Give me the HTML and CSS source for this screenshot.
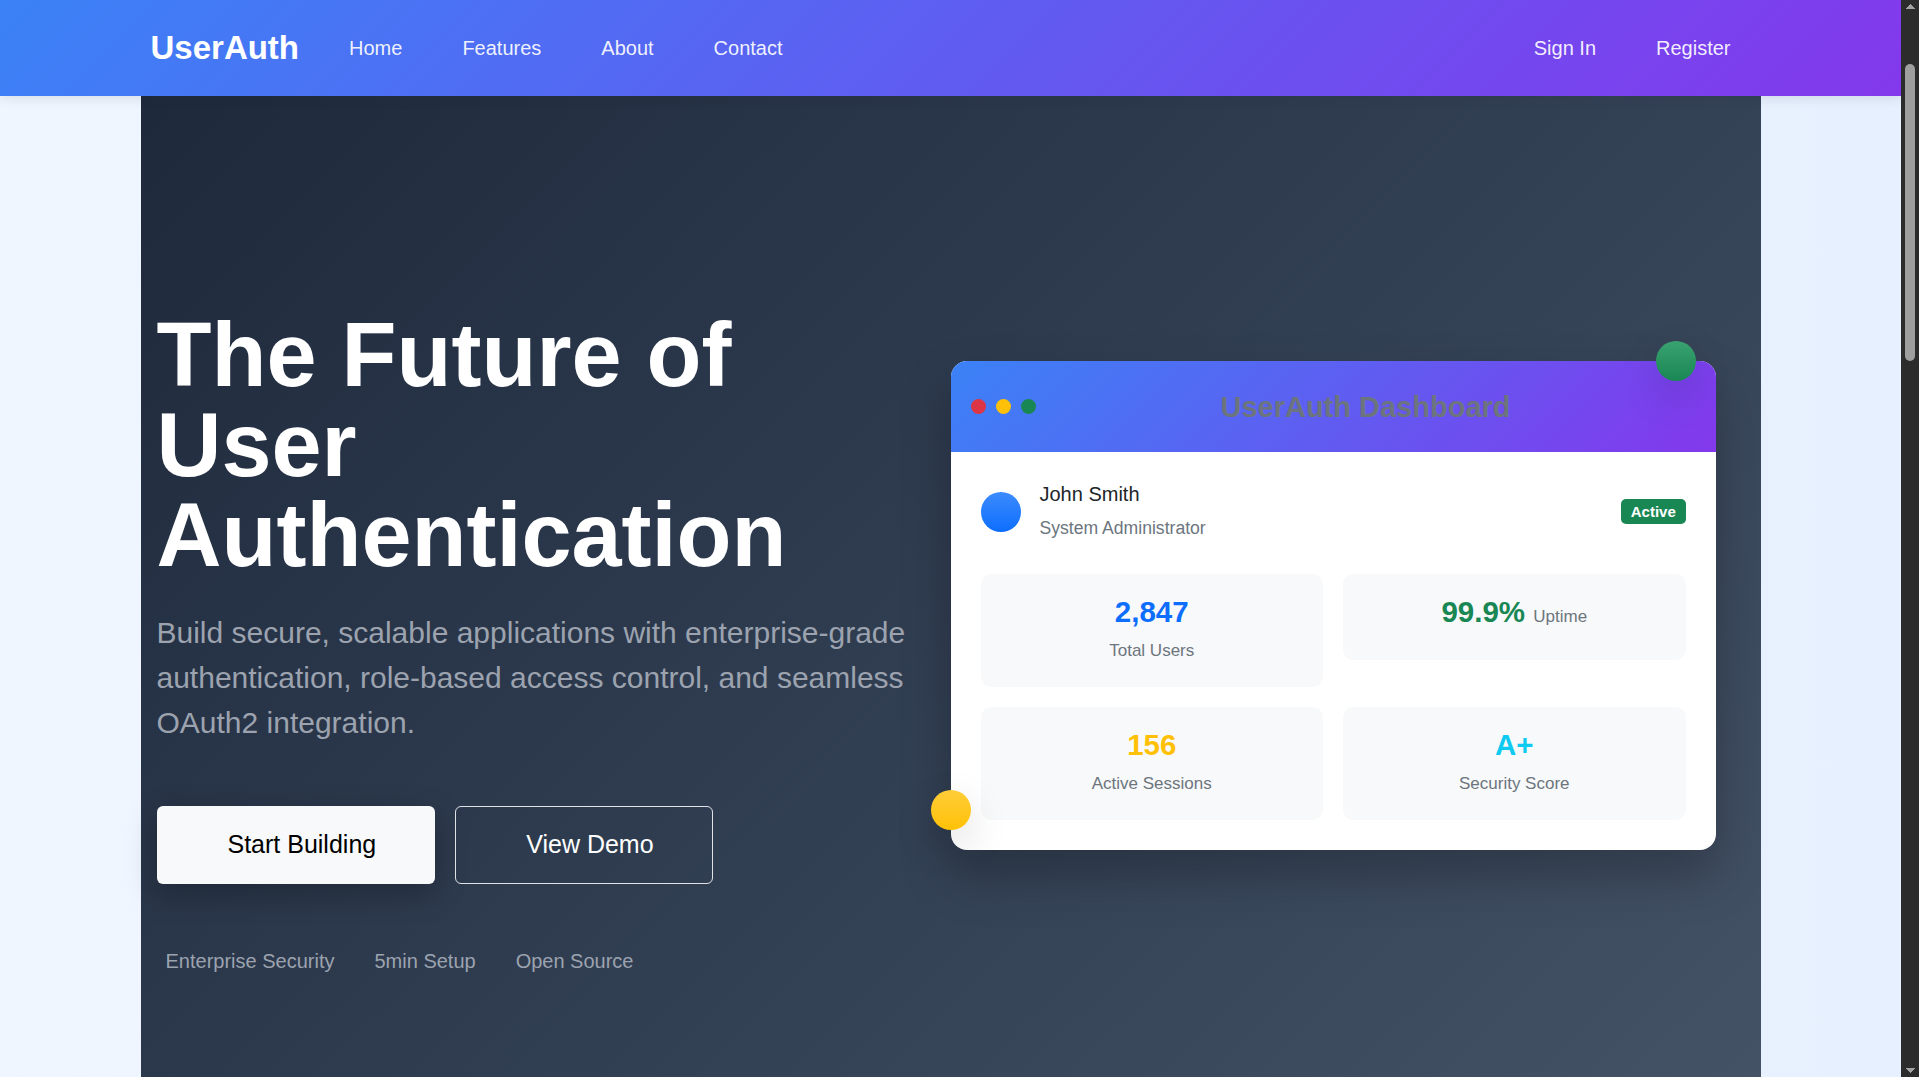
FILE: index.html
```html
<!DOCTYPE html>
<html lang="en">
<head>
<meta charset="utf-8">
<title>UserAuth - The Future of User Authentication</title>
<link rel="stylesheet" href="styles.css">
</head>
<body>
<nav class="topbar">
  <div class="topbar-inner">
    <a class="brand" href="#">UserAuth</a>
    <ul class="nav-links">
      <li><a href="#">Home</a></li>
      <li><a href="#features">Features</a></li>
      <li><a href="#about">About</a></li>
      <li><a href="#contact">Contact</a></li>
    </ul>
    <ul class="nav-links nav-right">
      <li><a href="#">Sign In</a></li>
      <li><a href="#">Register</a></li>
    </ul>
  </div>
</nav>

<main>
  <section class="hero">
    <div class="hero-text">
      <h1 class="hero-title">The Future of User Authentication</h1>
      <p class="hero-lead">Build secure, scalable applications with enterprise-grade authentication, role-based access control, and seamless OAuth2 integration.</p>
      <div class="hero-actions">
        <a class="btn btn-light" href="#">Start Building</a>
        <a class="btn btn-outline" href="#">View Demo</a>
      </div>
      <div class="hero-highlights">
        <span>Enterprise Security</span>
        <span>5min Setup</span>
        <span>Open Source</span>
      </div>
    </div>

    <div class="hero-visual">
      <div class="dash-card">
        <div class="dash-head">
          <div class="dots">
            <span class="dot dot-red"></span>
            <span class="dot dot-yellow"></span>
            <span class="dot dot-green"></span>
          </div>
          <div class="dash-title">UserAuth Dashboard</div>
        </div>
        <div class="dash-body">
          <div class="user-row">
            <div class="avatar"></div>
            <div class="user-info">
              <div class="user-name">John Smith</div>
              <div class="user-role">System Administrator</div>
            </div>
            <span class="badge">Active</span>
          </div>
          <div class="stats">
            <div class="stat">
              <div class="stat-num num-blue">2,847</div>
              <div class="stat-label">Total Users</div>
            </div>
            <div class="stat">
              <div class="stat-num num-green">99.9% <small>Uptime</small></div>
            </div>
            <div class="stat">
              <div class="stat-num num-yellow">156</div>
              <div class="stat-label">Active Sessions</div>
            </div>
            <div class="stat">
              <div class="stat-num num-cyan">A+</div>
              <div class="stat-label">Security Score</div>
            </div>
          </div>
        </div>
        <span class="float float-green"></span>
        <span class="float float-yellow"></span>
      </div>
    </div>
  </section>

  <section class="section section-features" id="features">
    <h2 class="section-title">Everything you need to secure your app</h2>
    <p class="section-sub">Authentication, authorization and user management in one place.</p>
    <div class="feature-grid">
      <div class="feature"><h3>JWT Tokens</h3><p>Stateless, signed tokens with refresh rotation.</p></div>
      <div class="feature"><h3>Role-Based Access</h3><p>Fine-grained permissions for every user and team.</p></div>
      <div class="feature"><h3>OAuth2 Providers</h3><p>Sign in with Google, GitHub and more.</p></div>
      <div class="feature"><h3>Two-Factor Auth</h3><p>TOTP and email codes out of the box.</p></div>
      <div class="feature"><h3>Audit Logs</h3><p>Track every login and permission change.</p></div>
      <div class="feature"><h3>Session Control</h3><p>View and revoke active sessions instantly.</p></div>
    </div>
  </section>

  <section class="section section-about" id="about">
    <h2 class="section-title">About UserAuth</h2>
    <p class="section-sub">An open source authentication platform built for developers who care about security.</p>
  </section>

  <section class="section section-contact" id="contact">
    <h2 class="section-title">Contact</h2>
    <p class="section-sub">Questions? Reach out to the team at hello@userauth.dev</p>
  </section>

  <footer class="footer">
    <p>&copy; 2024 UserAuth. All rights reserved.</p>
  </footer>
</main>

<div class="scrollbar" aria-hidden="true">
  <span class="sb-arrow sb-up"></span>
  <span class="sb-thumb"></span>
  <span class="sb-arrow sb-down"></span>
</div>
</body>
</html>
```

FILE: styles.css
```css
* {
  box-sizing: border-box;
}

html,
body {
  margin: 0;
}

html {
  scrollbar-width: none;
}

body {
  padding-right: 18px;
  font-family: "Liberation Sans", Arial, Helvetica, sans-serif;
  color: #212529;
  background: linear-gradient(90deg, #eff6ff 0%, #e7f0fe 100%);
}

a {
  text-decoration: none;
  color: inherit;
}

/* ---------- Window scrollbar (drawn) ---------- */
.scrollbar {
  position: fixed;
  top: 0;
  right: 0;
  z-index: 50;
  width: 18px;
  height: 100vh;
  display: flex;
  flex-direction: column;
  align-items: center;
  background: #2c2c2c;
}

.sb-arrow {
  flex: none;
  width: 9px;
  height: 5px;
}

.sb-up {
  margin-top: 4px;
  background: conic-gradient(from 135deg at 50% 0, #a3a3a3 90deg, transparent 0);
}

.sb-thumb {
  flex: none;
  width: 10px;
  height: 297px;
  margin-top: 55px;
  border-radius: 5px;
  background: #9f9f9f;
}

.sb-down {
  margin-top: auto;
  margin-bottom: 4px;
  background: conic-gradient(from -45deg at 50% 100%, #a3a3a3 90deg, transparent 0);
}

/* ---------- Top bar ---------- */
.topbar {
  position: sticky;
  top: 0;
  z-index: 20;
  height: 96px;
  background: linear-gradient(135deg, #3b82f6 0%, #8338ec 100%);
  box-shadow: 0 2px 12px rgba(30, 41, 59, 0.12);
}

.topbar-inner {
  max-width: 1620px;
  height: 100%;
  margin: 0 auto;
  padding-left: 10px;
  display: flex;
  align-items: center;
}

.brand {
  font-size: 33px;
  font-weight: 700;
  color: #fff;
  margin-right: 20px;
}

.nav-links {
  list-style: none;
  margin: 0;
  padding: 0;
  display: flex;
}

.nav-links a {
  display: block;
  padding: 0 30px;
  font-size: 20px;
  line-height: 30px;
  color: rgba(255, 255, 255, 0.92);
}

.nav-right {
  margin-left: auto;
}

/* ---------- Hero ---------- */
.hero {
  max-width: 1620px;
  min-height: 1150px;
  margin: 0 auto;
  padding: 214px 14px 0 16px;
  display: flex;
  align-items: flex-start;
  gap: 12px;
  background: linear-gradient(135deg, #1e293b 0%, #334155 55%, #475569 100%);
}

.hero-text {
  flex: none;
  width: 782px;
}

.hero-title {
  margin: 0 0 30px;
  max-width: 720px;
  font-size: 90px;
  line-height: 1;
  font-weight: 700;
  color: #fff;
}

.hero-lead {
  margin: 0 0 61px;
  font-size: 30px;
  line-height: 1.5;
  color: #9ca3af;
}

.hero-actions {
  display: flex;
  gap: 20px;
}

.btn {
  display: inline-block;
  padding: 19px 58px 19px 70px;
  font-size: 25px;
  line-height: 37.5px;
  border: 1px solid transparent;
  border-radius: 6px;
}

.btn-light {
  background: #f8f9fa;
  color: #000;
  box-shadow: 0 10px 30px rgba(0, 0, 0, 0.25);
}

.btn-outline {
  color: #fff;
  border-color: rgba(255, 255, 255, 0.85);
}

.hero-highlights {
  margin-top: 62px;
  padding-left: 9px;
  display: flex;
  gap: 40px;
  font-size: 20px;
  line-height: 30px;
  color: #9ca3af;
}

/* ---------- Dashboard card ---------- */
.hero-visual {
  flex: none;
  width: 765px;
  margin-top: 51px;
}

.dash-card {
  position: relative;
  background: #fff;
  border-radius: 16px;
  box-shadow: 0 25px 50px rgba(0, 0, 0, 0.25);
}

.dash-head {
  height: 91px;
  padding: 0 20px;
  display: flex;
  align-items: center;
  border-radius: 16px 16px 0 0;
  background: linear-gradient(135deg, #3b82f6 0%, #8338ec 100%);
}

.dots {
  display: flex;
  gap: 10px;
}

.dot {
  width: 15px;
  height: 15px;
  border-radius: 50%;
}

.dot-red { background: #dc3545; }
.dot-yellow { background: #ffc107; }
.dot-green { background: #198754; }

.dash-title {
  flex: 1;
  text-align: center;
  font-size: 29px;
  font-weight: 700;
  line-height: 44px;
  color: #6c757d;
}

.dash-body {
  padding: 30px;
}

.user-row {
  display: flex;
  align-items: center;
  margin-bottom: 33px;
}

.avatar {
  flex: none;
  width: 40px;
  height: 40px;
  margin-right: 19px;
  border-radius: 50%;
  background: linear-gradient(180deg, #3d8bfd 0%, #0d6efd 100%);
}

.user-info {
  flex: 1;
}

.user-name {
  font-size: 20px;
  line-height: 24px;
  color: #212529;
}

.user-role {
  margin-top: 9px;
  font-size: 17.6px;
  line-height: 26.4px;
  color: #6c757d;
}

.badge {
  padding: 5.25px 9.75px;
  font-size: 15px;
  font-weight: 700;
  line-height: 1;
  color: #fff;
  background: #198754;
  border-radius: 5px;
}

.stats {
  display: grid;
  grid-template-columns: 1fr 1fr;
  gap: 20px;
  align-items: start;
}

.stat {
  padding: 20px;
  text-align: center;
  background: #f8f9fa;
  border-radius: 10px;
}

.stat-num {
  margin-bottom: 5px;
  font-size: 29.5px;
  font-weight: 700;
  line-height: 36px;
}

.stat-num small {
  font-size: 17px;
  font-weight: 400;
  color: #6c757d;
}

.stat-label {
  font-size: 17px;
  line-height: 32px;
  color: #6c757d;
}

.num-blue { color: #0d6efd; }
.num-green { color: #198754; }
.num-yellow { color: #ffc107; }
.num-cyan { color: #0dcaf0; }

.float {
  position: absolute;
  width: 40px;
  height: 40px;
  border-radius: 50%;
  box-shadow: 0 15px 40px rgba(0, 0, 0, 0.15);
}

.float-green {
  top: -20px;
  right: 20px;
  background: linear-gradient(180deg, #3aa271 0%, #198754 100%);
}

.float-yellow {
  left: -20px;
  bottom: 20px;
  background: linear-gradient(180deg, #ffcd39 0%, #ffc107 100%);
}

/* ---------- Lower sections ---------- */
.section {
  max-width: 1620px;
  margin: 0 auto;
  padding: 96px 14px;
}

.section-features { min-height: 900px; }
.section-about { min-height: 700px; }
.section-contact { min-height: 650px; }

.section-title {
  margin: 0 0 16px;
  font-size: 44px;
  text-align: center;
  color: #1e293b;
}

.section-sub {
  margin: 0 0 48px;
  font-size: 22px;
  text-align: center;
  color: #6c757d;
}

.feature-grid {
  display: grid;
  grid-template-columns: repeat(3, 1fr);
  gap: 24px;
}

.feature {
  padding: 32px;
  background: #fff;
  border-radius: 16px;
  box-shadow: 0 10px 30px rgba(30, 41, 59, 0.08);
}

.feature h3 {
  margin: 0 0 12px;
  font-size: 24px;
  color: #1e293b;
}

.feature p {
  margin: 0;
  font-size: 18px;
  line-height: 1.5;
  color: #6c757d;
}

.footer {
  min-height: 284px;
  padding: 48px 14px;
  text-align: center;
  color: #cbd5e1;
  background: #1e293b;
}
```
